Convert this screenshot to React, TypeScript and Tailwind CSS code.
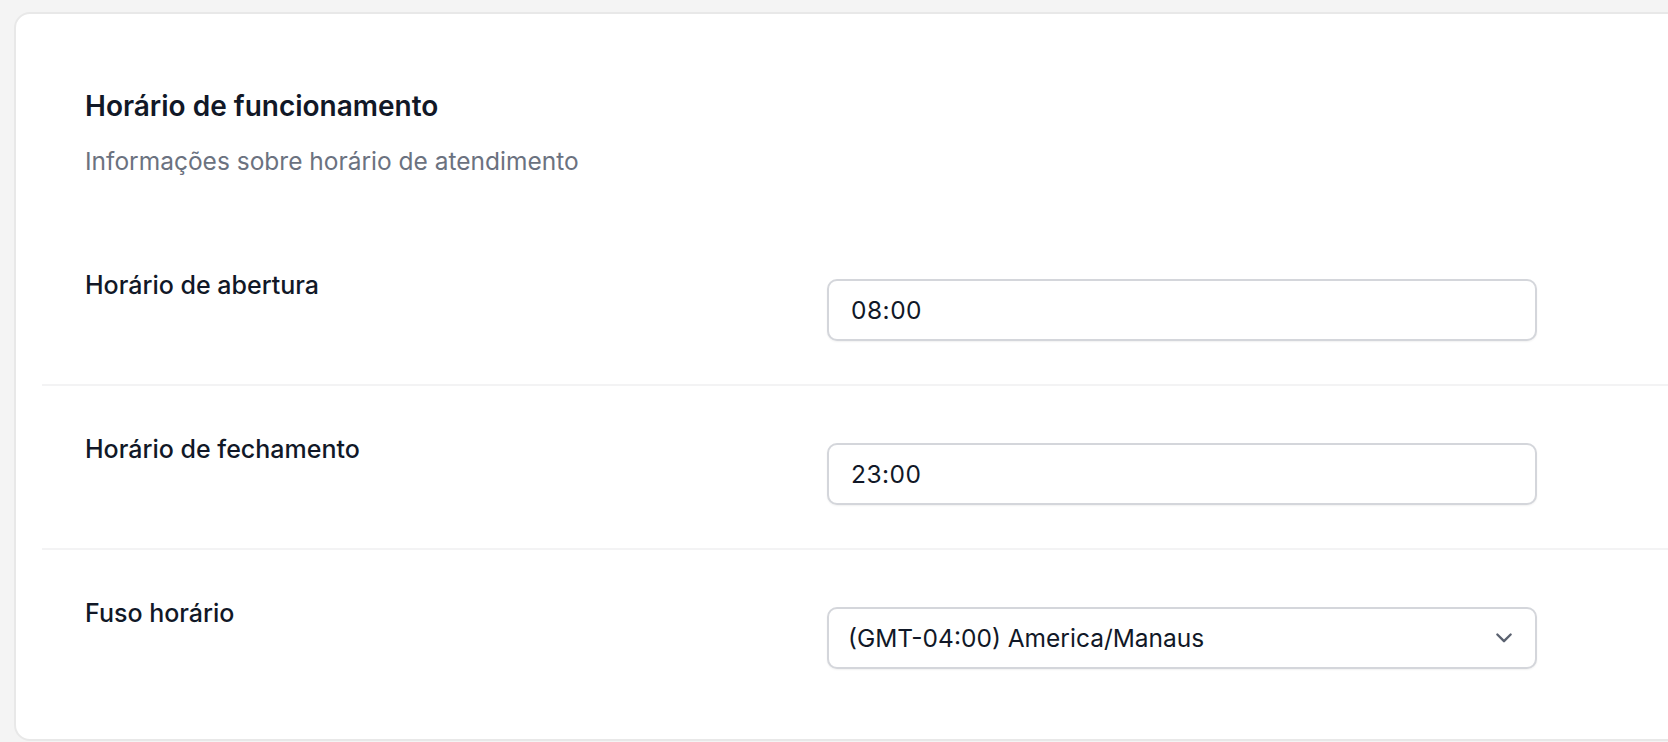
import React from "react";

const font = { fontFamily: "Inter, 'Noto Sans', sans-serif" };

function Row({ label, children, last }: { label: string; children: React.ReactNode; last?: boolean }) {
  return (
    <div className={`flex items-start px-[43px] pt-[45px] pb-[43px] ${last ? "" : "border-b-2 border-[#f3f3f4]"}`}>
      <div className="w-[742px] shrink-0 text-[25px] leading-[36px] font-medium text-[#111827]">{label}</div>
      <div className="mt-[12px] w-[710px] shrink-0">{children}</div>
    </div>
  );
}

function TextInput({ value }: { value: string }) {
  return (
    <div className="flex h-[62px] items-center rounded-[10px] border-2 border-[#d4d6db] bg-white pl-[22px] text-[24.5px] tracking-[0.02em] text-[#111827] shadow-[0_1px_2px_rgba(0,0,0,0.06)]">
      {value}
    </div>
  );
}

export default function App() {
  return (
    <div className="h-[742px] w-[1668px] overflow-hidden bg-[#f4f4f4] pl-[14px] pt-[12px]" style={font}>
      <div className="h-[729px] w-[1700px] rounded-[16px] border-2 border-[#e8e8e8] bg-white">
        <div className="px-[69px] pt-[71px] pb-[43px]">
          <div className="text-[28px] leading-[42px] font-semibold text-[#111827]">Horário de funcionamento</div>
          <div className="mt-[16px] text-[24.5px] leading-[36px] text-[#6b7280]">Informações sobre horário de atendimento</div>
        </div>
        <div className="mx-[26px]">
          <Row label="Horário de abertura">
            <TextInput value="08:00" />
          </Row>
          <Row label="Horário de fechamento">
            <TextInput value="23:00" />
          </Row>
          <Row label="Fuso horário" last>
            <div className="flex h-[62px] items-center justify-between rounded-[10px] border-2 border-[#d4d6db] bg-white pl-[19px] pr-[17px] text-[24.5px] text-[#111827] shadow-[0_1px_2px_rgba(0,0,0,0.06)]">
              <span>(GMT-04:00) America/Manaus</span>
              <svg width="28" height="28" viewBox="0 0 20 20" fill="none">
                <path d="M5.25 7.5l4.75 4.75 4.75-4.75" stroke="#5b6270" strokeWidth="1.7" strokeLinecap="round" strokeLinejoin="round" />
              </svg>
            </div>
          </Row>
        </div>
      </div>
    </div>
  );
}
